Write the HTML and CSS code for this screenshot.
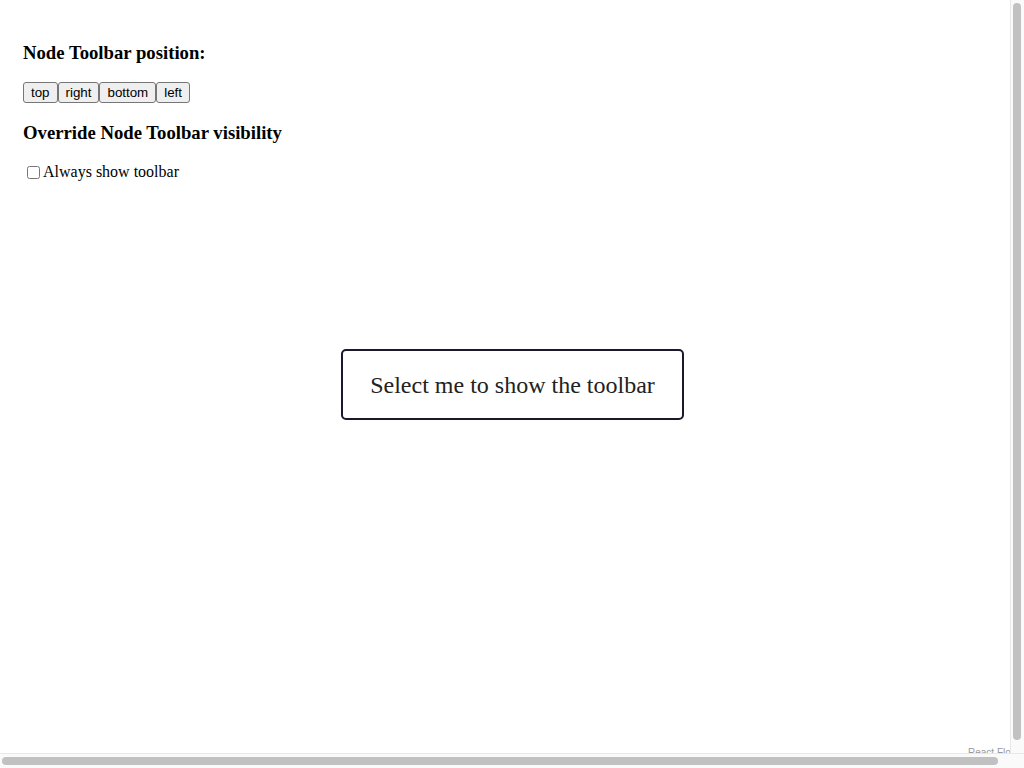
FILE: index.html
```html
<!DOCTYPE html>
<html>
<head>
<meta charset="utf-8">
<link rel="stylesheet" href="styles.css">
</head>
<body>
<div class="flow">
  <div class="panel">
    <h3>Node Toolbar position:</h3>
    <div class="btns"><button class="btn">top</button><button class="btn">right</button><button class="btn">bottom</button><button class="btn">left</button></div>
    <h3>Override Node Toolbar visibility</h3>
    <label class="check"><input type="checkbox" class="cb">Always show toolbar</label>
  </div>
  <div class="node">Select me to show the toolbar</div>
  <div class="attribution">React Flow</div>
</div>
<div class="vscroll"><div class="vthumb"></div></div>
<div class="hscroll"><div class="hthumb"></div></div>
</body>
</html>
```
FILE: styles.css
```css
html, body {
  margin: 0;
  padding: 0;
  background: #fff;
  overflow: hidden;
}
body {
  font-family: "Liberation Serif", "Times New Roman", serif;
  font-size: 16px;
  color: #000;
}
.flow {
  position: relative;
  width: 1024px;
  height: 768px;
}
.panel {
  position: absolute;
  top: 8px;
  left: 8px;
  margin: 15px;
}
.panel h3 {
  font-size: 18.72px;
  font-weight: bold;
  margin: 18.72px 0;
}
.btns {
  display: flex;
}
.btn {
  font-family: "Liberation Sans", Arial, sans-serif;
  font-size: 13.33px;
  color: #000;
  background: #efefef;
  border: 1px solid #767676;
  border-radius: 3px;
  padding: 2px 7px 1px;
  height: 21px;
  margin: 0;
  line-height: 16px;
}
.btns + h3 {
  margin-top: 19px;
}
.check {
  display: flex;
  align-items: center;
  margin-top: 2px;
}
.cb {
  width: 13px;
  height: 13px;
  margin: 0 3px 0 4px;
}
.node {
  position: absolute;
  left: 341px;
  top: 349px;
  width: 343px;
  height: 71px;
  box-sizing: border-box;
  border: 2px solid #1a192b;
  border-radius: 5px;
  background: #fff;
  color: #222;
  font-size: 24px;
  display: flex;
  align-items: center;
  justify-content: center;
  padding-top: 2px;
}
.attribution {
  position: absolute;
  left: 965px;
  top: 745px;
  font-size: 10px;
  color: #999;
  padding: 2px 3px;
  background: rgba(255, 255, 255, 0.5);
  font-family: "Liberation Sans", Arial, sans-serif;
  white-space: nowrap;
}
.vscroll {
  position: fixed;
  top: 0;
  right: 0;
  width: 13px;
  height: 753px;
  background: #fafafa;
  border-left: 1px solid #e8e8e8;
}
.vthumb {
  margin: 3px 0 0 2px;
  width: 8px;
  height: 737px;
  border-radius: 4px;
  background: #c1c1c1;
}
.hscroll {
  position: fixed;
  left: 0;
  bottom: 0;
  width: 1024px;
  height: 14px;
  background: #fafafa;
  border-top: 1px solid #e8e8e8;
}
.hthumb {
  margin: 3px 0 0 2px;
  width: 996px;
  height: 8px;
  border-radius: 4px;
  background: #c1c1c1;
}
```
